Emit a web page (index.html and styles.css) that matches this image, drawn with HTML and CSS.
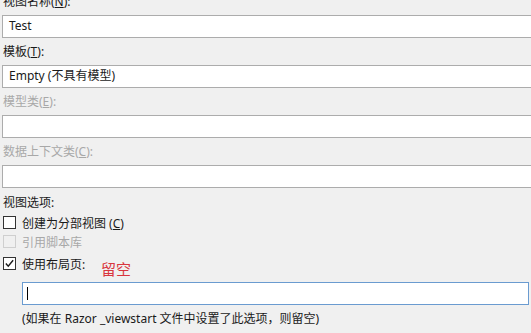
FILE: index.html
```html
<!DOCTYPE html>
<html lang="zh-CN">
<head>
<meta charset="utf-8">
<link rel="stylesheet" href="styles.css">
</head>
<body>
<div class="dialog">
  <div class="label first">视图名称(<u>N</u>):</div>
  <div class="field">Test</div>
  <div class="label">模板(<u>T</u>):</div>
  <div class="field">Empty (不具有模型)</div>
  <div class="label disabled">模型类(<u>E</u>):</div>
  <div class="field"></div>
  <div class="label disabled">数据上下文类(<u>C</u>):</div>
  <div class="field"></div>
  <div class="group">视图选项:</div>
  <div class="check row1"><span class="box"></span><span>创建为分部视图 (<u>C</u>)</span></div>
  <div class="check row2 disabled"><span class="box off"></span><span>引用脚本库</span></div>
  <div class="check row3"><span class="box"><svg viewBox="0 0 13 13" width="11" height="11"><path d="M2.2 6.6 L5 9.6 L10.8 2.6" fill="none" stroke="#1b1b1b" stroke-width="1.7"/></svg></span><span>使用布局页:</span></div>
  <div class="layout-field"><span class="caret"></span></div>
  <div class="note">(如果在 Razor _viewstart 文件中设置了此选项，则留空)</div>
  <div class="annot">留空</div>
</div>
</body>
</html>
```
FILE: styles.css
```css
html, body {
  margin: 0;
  padding: 0;
  background: #f0f0f0;
  overflow: hidden;
  width: 531px;
  height: 333px;
}
.dialog {
  position: relative;
  font-family: "Noto Sans", "Noto Sans CJK SC", sans-serif;
  font-size: 12px;
  color: #1a1a1a;
  padding-left: 2px;
  margin-top: -12px;
}
u { text-decoration: underline; text-underline-offset: 1px; }
.label {
  height: 27px;
  line-height: 27px;
  padding-left: 1px;
}
.label.disabled, .check.disabled { color: #a8a8a8; }
.field {
  box-sizing: border-box;
  height: 23px;
  width: 540px;
  background: #fff;
  border: 1px solid #acacac;
  border-right: none;
  line-height: 20px;
  padding-left: 6px;
}
.group {
  margin-top: 5px;
  height: 20px;
  line-height: 20px;
  padding-left: 1px;
}
.check {
  display: flex;
  align-items: center;
  gap: 6px;
  height: 19px;
  padding-left: 1px;
}
.check.row3 { margin-top: 3px; }
.box {
  box-sizing: border-box;
  width: 13px;
  height: 13px;
  border: 1px solid #333;
  background: #fff;
  display: flex;
  align-items: center;
  justify-content: center;
}
.box.off {
  border-color: #cfcfcf;
  background: #f0f0f0;
}
.layout-field {
  box-sizing: border-box;
  margin-top: 9px;
  margin-left: 20px;
  width: 507px;
  height: 23px;
  background: #fff;
  border: 1px solid #6a9bd0;
  display: flex;
  align-items: center;
  padding-left: 4px;
}
.caret {
  width: 1px;
  height: 13px;
  background: #000;
}
.note {
  height: 28px;
  line-height: 28px;
  padding-left: 20px;
}
.annot {
  position: absolute;
  left: 101px;
  top: 271px;
  font-size: 15px;
  line-height: 20px;
  color: #d9363e;
}
```
